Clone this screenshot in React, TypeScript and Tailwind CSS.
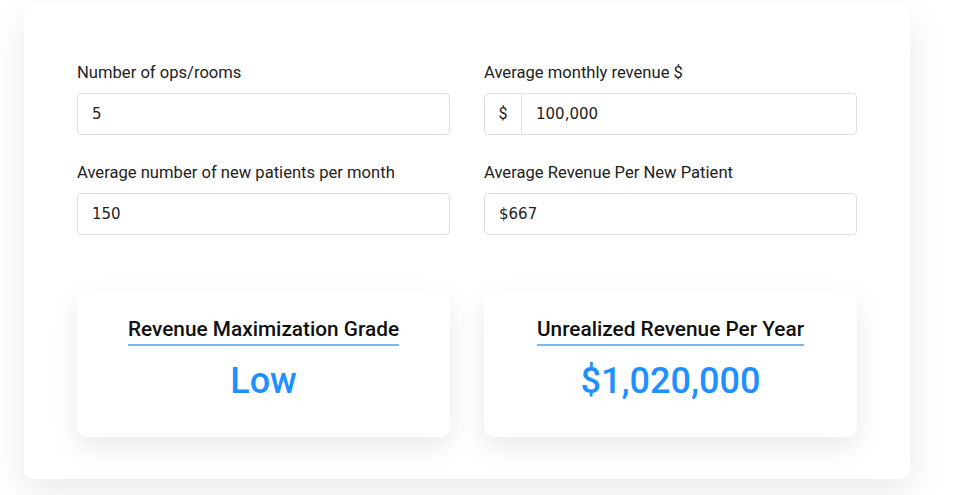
import React from 'react';

const inputCls =
  "w-full h-[42px] rounded-[4px] border border-[#dcdfe3] bg-white px-[14px] text-[15px] text-[#222] outline-none font-['DejaVu_Sans',Verdana,sans-serif]";

function Field({ label, children }: { label: string; children: React.ReactNode }) {
  return (
    <div className="flex flex-col">
      <label className="text-[16.6px] leading-6 text-[#222] mb-[8px]">{label}</label>
      {children}
    </div>
  );
}

function ResultCard({ title, value }: { title: string; value: string }) {
  return (
    <div className="h-[146px] rounded-[10px] bg-white shadow-[0_10px_28px_rgba(0,0,0,0.09)] flex flex-col items-center pt-[25px]">
      <span className="text-[20.8px] leading-[26px] font-medium text-[#111] border-b-2 border-[#7ab8f5] pb-[2px]">
        {title}
      </span>
      <span className="mt-[13px] text-[36px] leading-[44px] font-medium text-[#1e90ff]">{value}</span>
    </div>
  );
}

export default function App() {
  return (
    <div className="min-h-[495px] bg-white pt-[4px] pl-[24px] font-['Roboto',sans-serif]">
      <div className="w-[886px] rounded-[10px] bg-white shadow-[0_14px_40px_rgba(0,0,0,0.09)] px-[53px] pt-[57px] pb-[42px]">
        <div className="grid grid-cols-2 gap-x-[34px] gap-y-[26px]">
          <Field label="Number of ops/rooms">
            <input className={inputCls} defaultValue="5" />
          </Field>
          <Field label="Average monthly revenue $">
            <div className="flex h-[42px] rounded-[4px] border border-[#dcdfe3] bg-white">
              <span className="w-[37px] flex items-center justify-center border-r border-[#dcdfe3] text-[16px] text-[#222]">$</span>
              <input
                className="flex-1 min-w-0 px-[14px] text-[15px] text-[#222] outline-none font-['DejaVu_Sans',Verdana,sans-serif]"
                defaultValue="100,000"
              />
            </div>
          </Field>
          <Field label="Average number of new patients per month">
            <input className={inputCls} defaultValue="150" />
          </Field>
          <Field label="Average Revenue Per New Patient">
            <input className={inputCls} defaultValue="$667" />
          </Field>
        </div>
        <div className="grid grid-cols-2 gap-x-[34px] mt-[56px]">
          <ResultCard title="Revenue Maximization Grade" value="Low" />
          <ResultCard title="Unrealized Revenue Per Year" value="$1,020,000" />
        </div>
      </div>
    </div>
  );
}
